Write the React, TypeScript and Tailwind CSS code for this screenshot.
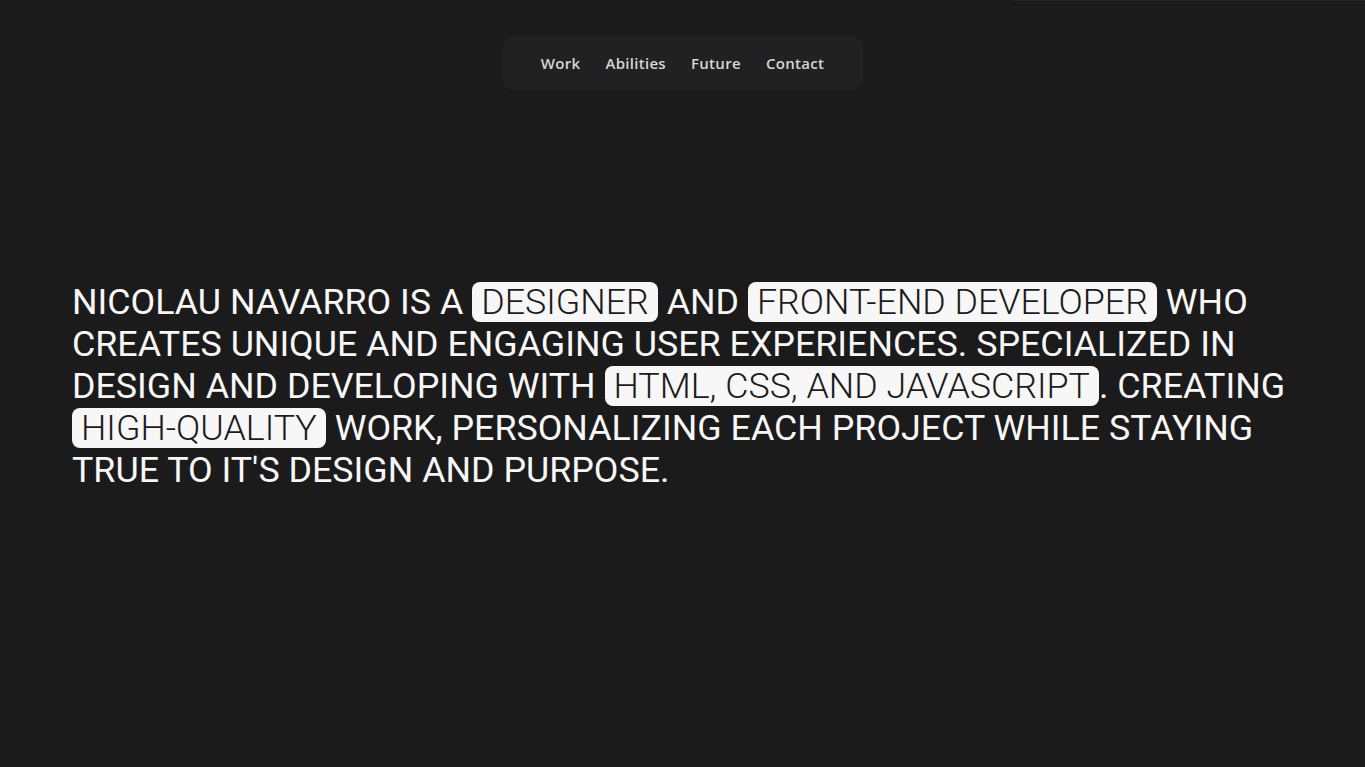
import React from "react";

const Pill = ({ children }: { children: React.ReactNode }) => (
  <span className="inline-block rounded-[8px] bg-[#f7f7f7] px-[9px] leading-[40px] font-light text-[#1b1b1b]">
    {children}
  </span>
);

export default function App() {
  return (
    <div className="relative h-[767px] w-full bg-[#1b1b1b] overflow-hidden">
      <div className="absolute top-0 right-0 h-px w-[355px] bg-[#222222]" />
      <nav className="absolute left-1/2 top-[36px] -translate-x-1/2 flex h-[54px] items-center gap-[25px] rounded-[12px] bg-[#212121] px-[39px] text-[15px] tracking-[0.3px] font-semibold text-[#d6d6d6] [font-family:'Open_Sans',sans-serif]">
        <span>Work</span>
        <span>Abilities</span>
        <span>Future</span>
        <span>Contact</span>
      </nav>
      <main className="flex h-full items-center pl-[72px] pr-[72px] pt-[4px]">
        <p className="text-[35.8px] leading-[42px] uppercase text-[#f7f7f7] [font-family:Roboto,sans-serif]">
          Nicolau Navarro is a <Pill>designer</Pill> and <Pill>front-end developer</Pill> who creates unique and engaging user experiences. Specialized in design and developing with <Pill>HTML, CSS, and JavaScript</Pill>. Creating <Pill>high-quality</Pill> work, personalizing each project while staying true to it's design and purpose.
        </p>
      </main>
    </div>
  );
}
